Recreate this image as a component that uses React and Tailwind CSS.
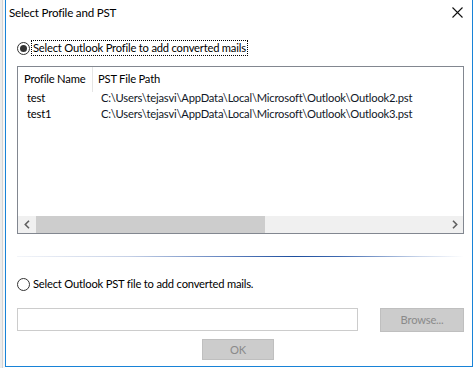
import React from 'react';

const Radio = ({ checked }) => (
    <div className="w-[13px] h-[13px] rounded-full border border-[#333333] bg-white flex items-center justify-center shrink-0">
        {checked && <div className="w-[7px] h-[7px] rounded-full bg-[#333333]" />}
    </div>
);

const rows = [
    { name: 'test', path: 'C:\\Users\\tejasvi\\AppData\\Local\\Microsoft\\Outlook\\Outlook2.pst' },
    { name: 'test1', path: 'C:\\Users\\tejasvi\\AppData\\Local\\Microsoft\\Outlook\\Outlook3.pst' },
];

export default function App() {
    return (
        <div className="w-[474px] h-[368px] bg-white flex font-['Lato',sans-serif] text-[11.2px] tracking-[-0.2px] leading-none text-black whitespace-nowrap">
            {/* Background window strip */}
            <div className="w-[5px] h-full flex bg-[#ececec]">
                <div className="w-[2px]" />
                <div className="w-px bg-[#d4d4d4]" />
                <div className="w-[2px] bg-[#f7f7f7]" />
            </div>

            {/* Dialog */}
            <div className="w-[468px] h-[367px] border-x border-b border-[#1883d7] flex flex-col">
                {/* Title bar */}
                <div className="h-[26px] flex items-center justify-between pl-[3px] pr-[9px]">
                    <span className="text-[11.6px]">Select Profile and PST</span>
                    <svg width="11" height="11" viewBox="0 0 11 11" className="mb-[2px]">
                        <path d="M0.5 0.5 L10.5 10.5 M10.5 0.5 L0.5 10.5" stroke="#111" strokeWidth="1.1" />
                    </svg>
                </div>

                <div className="pl-[11px] pr-[8px] flex flex-col">
                    {/* Radio 1 */}
                    <div className="mt-[14px] h-[16px] flex items-center">
                        <Radio checked />
                        <span className="ml-[1px] h-[16px] px-[1px] flex items-center border border-dotted border-black">
                            Select Outlook Profile to add converted mails
                        </span>
                    </div>

                    {/* List view */}
                    <div className="mt-[10px] h-[168px] border border-[#828790] flex flex-col">
                        <div className="h-[23px] flex items-center">
                            <div className="w-[74px] pl-[6px]">Profile Name</div>
                            <div className="w-px h-[25px] self-start bg-[#e5e5e5]" />
                            <div className="pl-[5px]">PST File Path</div>
                        </div>
                        {rows.map((r) => (
                            <div key={r.name} className="h-[16px] flex items-center">
                                <div className="w-[75px] pl-[9px]">{r.name}</div>
                                <div className="pl-[8px] text-[#111827]">{r.path}</div>
                            </div>
                        ))}
                        <div className="flex-1" />
                        {/* Horizontal scrollbar */}
                        <div className="h-[17px] bg-[#f0f0f0] flex items-stretch">
                            <div className="w-[17px] flex items-center justify-center">
                                <svg width="6" height="9" viewBox="0 0 6 9">
                                    <path d="M5 0.8 L1.3 4.5 L5 8.2" fill="none" stroke="#606060" strokeWidth="1.6" />
                                </svg>
                            </div>
                            <div className="ml-px w-[229px] bg-[#cdcdcd]" />
                            <div className="flex-1" />
                            <div className="w-[17px] flex items-center justify-center">
                                <svg width="6" height="9" viewBox="0 0 6 9">
                                    <path d="M1 0.8 L4.7 4.5 L1 8.2" fill="none" stroke="#606060" strokeWidth="1.6" />
                                </svg>
                            </div>
                        </div>
                    </div>

                    {/* Separator */}
                    <div className="mt-[22px] h-px bg-[linear-gradient(to_right,#f3f5f9,#c5d0e6_25%,#5d7fbd_48%,#1d4e9e_62%,#3e69b0_72%,#c9d5ea_90%,#ffffff)]" />

                    {/* Radio 2 */}
                    <div className="mt-[19px] h-[16px] flex items-center">
                        <Radio />
                        <span className="ml-[3px]">Select Outlook PST file to add converted mails.</span>
                    </div>

                    {/* PST path input + browse */}
                    <div className="mt-[16px] h-[24px] flex items-start">
                        <div className="w-[341px] h-[23px] border border-[#cccccc] bg-white" />
                        <div className="ml-auto w-[84px] h-[24px] bg-[#cccccc] border border-[#bfbfbf] flex items-center justify-center text-[#8a8a8a]">
                            Browse...
                        </div>
                    </div>

                    {/* OK */}
                    <div className="mt-[7px] ml-[185px] w-[72px] h-[21px] bg-[#cccccc] border border-[#bfbfbf] flex items-center justify-center text-[#8a8a8a]">
                        OK
                    </div>
                </div>
            </div>
        </div>
    );
}
